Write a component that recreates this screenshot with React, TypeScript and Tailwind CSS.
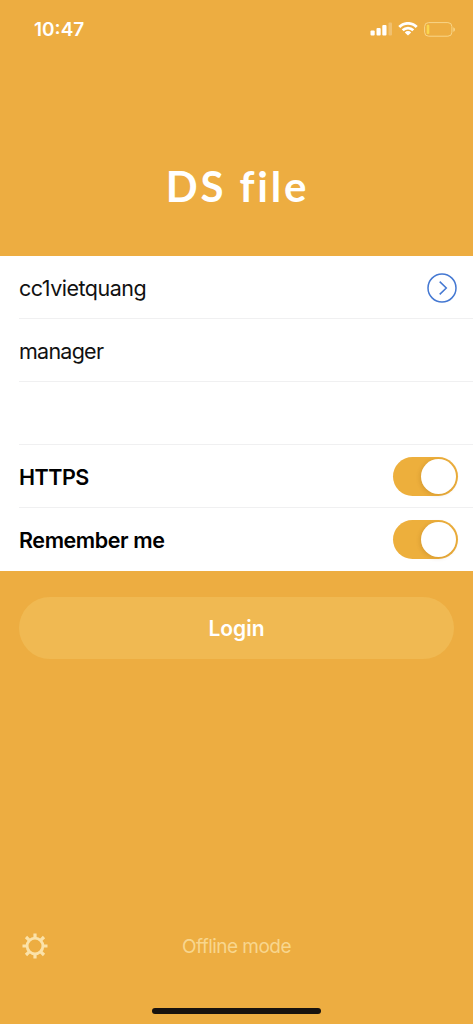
import type { ReactNode } from "react";

function StatusBar() {
  return (
    <div className="h-[58px] pl-[34px] pr-[17px] flex items-center justify-between text-white">
      <span className="text-[19px] leading-none font-semibold">10:47</span>
      <div className="flex items-center">
        <svg width="22" height="14" viewBox="0 0 22 14" fill="currentColor">
          <rect x="0.5" y="8.5" width="4.2" height="5" rx="1" />
          <rect x="6.5" y="6" width="4.2" height="7.5" rx="1" />
          <rect x="12.3" y="3" width="4.2" height="10.5" rx="1" />
          <rect x="18.5" y="0.5" width="3.5" height="13" rx="1" opacity="0.25" />
        </svg>
        <svg className="ml-1.5" width="20" height="14" viewBox="0 0 20 14" fill="none" stroke="currentColor">
          <path d="M1.3 5 A12.3 12.3 0 0 1 18.7 5" strokeWidth="2.9" />
          <path d="M4.7 8.3 A7.5 7.5 0 0 1 15.3 8.3" strokeWidth="2.7" />
          <path d="M6.8 10.4 A4.5 4.5 0 0 1 13.2 10.4 L10 13.6 Z" fill="currentColor" stroke="none" />
        </svg>
        <svg className="ml-1.5" width="32" height="15" viewBox="0 0 32 15" fill="none">
          <rect x="0.6" y="0.6" width="27.3" height="13.6" rx="4" stroke="#f8d588" strokeWidth="1" />
          <rect x="2.7" y="2.7" width="2.6" height="9.4" rx="1" fill="#fbd64c" />
          <path d="M29.3 5.2 C31.5 6 31.5 9 29.3 9.8 Z" fill="#f8d588" />
        </svg>
      </div>
    </div>
  );
}

function Row({ children, last }: { children?: ReactNode; last?: boolean }) {
  return (
    <div
      className={`ml-[19px] h-[63px] pr-[15px] flex items-center justify-between ${
        last ? "" : "border-b border-[#f0f0f1]"
      }`}
    >
      {children}
    </div>
  );
}

function Toggle({ label }: { label: string }) {
  return (
    <button
      role="switch"
      aria-checked="true"
      aria-label={label}
      className="w-[65px] h-[39px] rounded-full bg-[#edaf3c] p-0.5 flex items-center justify-end"
    >
      <span className="size-[35px] rounded-full bg-white shadow-[-1px_1px_4px_rgba(120,70,0,0.2)]" />
    </button>
  );
}

export default function App() {
  return (
    <div className="w-full h-screen flex flex-col bg-[#edad41] overflow-hidden font-['Inter',sans-serif] text-black">
      <StatusBar />
      <header className="h-[198px] pt-[98px] text-center">
        <h1 className="pl-[2px] font-['Lato',sans-serif] text-[42px] leading-[60px] font-bold tracking-[2.8px] text-white">
          DS file
        </h1>
      </header>

      <section className="bg-white text-[21.5px]">
        <Row>
          <span className="pt-0.5 text-[#111] tracking-[-0.5px]">cc1vietquang</span>
          <svg className="mt-px" width="32" height="32" viewBox="0 0 32 32" fill="none" stroke="#4478d2" strokeWidth="1.5">
            <circle cx="16" cy="16" r="14" />
            <path d="M13.7 9.6 L20.3 16 L13.7 22.4" />
          </svg>
        </Row>
        <Row>
          <span className="pt-0.5 text-[#111] tracking-[-0.75px]">manager</span>
        </Row>
        <Row />
        <Row>
          <span className="pt-0.5 font-semibold tracking-[-0.5px]">HTTPS</span>
          <Toggle label="HTTPS" />
        </Row>
        <Row last>
          <span className="pt-0.5 font-semibold tracking-[-0.42px]">Remember me</span>
          <Toggle label="Remember me" />
        </Row>
      </section>

      <button className="mx-[19px] mt-[26px] h-[62px] pt-0.5 shrink-0 rounded-full bg-[#f0b952] text-[21px] font-semibold text-white">
        Login
      </button>

      <footer className="mt-auto">
        <div className="h-[30px] px-[21px] grid grid-cols-[28px_1fr_28px] items-center">
          <svg className="-mt-0.5" width="28" height="28" viewBox="0 0 28 28" fill="none" stroke="#fbe2a9">
            <circle cx="14" cy="14" r="7.9" strokeWidth="2.8" />
            <path
              d="M14 1.5V6M14 22v4.5M1.5 14H6M22 14h4.5M5 5l3.4 3.4M19.6 19.6l3.4 3.4M5 23l3.4-3.4M19.6 8.4l3.4-3.4"
              strokeWidth="3.2"
            />
          </svg>
          <span className="text-center text-[19px] tracking-[-0.55px] text-[#f8d68e]">Offline mode</span>
        </div>
        <div className="mx-auto mt-[46px] mb-2.5 h-1.5 w-[169px] rounded-full bg-[#17120e]" />
      </footer>
    </div>
  );
}
